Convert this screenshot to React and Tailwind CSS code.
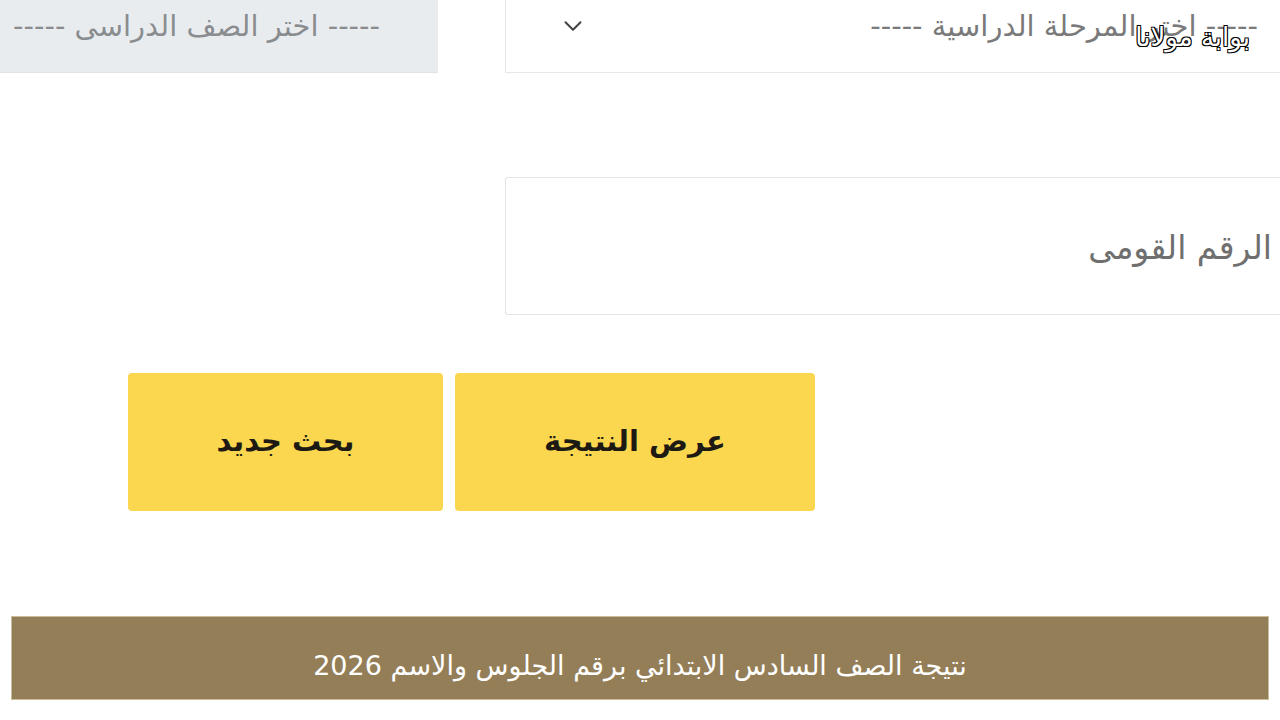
import { ChevronDown } from 'lucide-react';

export default function App() {
  return (
    <div className="relative w-[1280px] h-[720px] overflow-hidden bg-white font-['DejaVu_Sans',sans-serif]">
      {/* Top selects row */}
      <div className="flex h-[74px]">
        <div className="w-[438px] h-[73px] bg-[#e9ecef] border-b border-[#e1e4e7] flex items-center justify-end pr-[58px] overflow-hidden">
          <span dir="rtl" className="whitespace-nowrap text-[29px] text-[#8a8d90] -mt-[18px]">----- اختر الصف الدراسى -----</span>
        </div>
        <div className="ml-[67px] flex-1 h-[73px] border-l border-b border-[#e8e8e8] flex items-center pl-[52px] pr-[22px] overflow-hidden">
          <ChevronDown size={30} strokeWidth={1.6} className="text-[#444] -mt-[20px]" />
          <div className="flex-1 flex justify-end">
            <span dir="rtl" className="whitespace-nowrap text-[29px] text-[#7a7a7a] -mt-[18px]">----- اختر المرحلة الدراسية -----</span>
          </div>
        </div>
      </div>

      {/* National ID input */}
      <div className="mt-[103px] ml-[505px] h-[138px] border border-r-0 border-[#e4e4e4] rounded-l-[3px] flex items-center justify-end pr-[8px] overflow-hidden">
        <span dir="rtl" className="whitespace-nowrap text-[33px] text-[#6f6f6f] mt-[4px]">الرقم القومى</span>
      </div>

      {/* Buttons */}
      <div className="mt-[58px] ml-[128px] flex gap-[12px]">
        <div className="w-[315px] h-[138px] rounded-[4px] bg-[#fbd64f] flex items-center justify-center">
          <span dir="rtl" className="text-[29px] font-bold text-[#1c1a12]">بحث جديد</span>
        </div>
        <div className="w-[360px] h-[138px] rounded-[4px] bg-[#fbd64f] flex items-center justify-center">
          <span dir="rtl" className="text-[29px] font-bold text-[#1c1a12]">عرض النتيجة</span>
        </div>
      </div>

      {/* Caption bar */}
      <div className="mt-[105px] mx-[11px] h-[84px] bg-[#947e58] border border-[#cbbd9c] flex items-center justify-center pt-[16px]">
        <span dir="rtl" className="text-[27px] text-white">نتيجة الصف السادس الابتدائي برقم الجلوس والاسم 2026</span>
      </div>

      {/* Watermark */}
      <div dir="rtl" className="absolute top-[18px] right-[30px] text-[26px] text-white [text-shadow:1px_1px_0_#000,-1px_-1px_0_#000,1px_-1px_0_#000,-1px_1px_0_#000]">
        بوابة مولانا
      </div>
    </div>
  );
}
